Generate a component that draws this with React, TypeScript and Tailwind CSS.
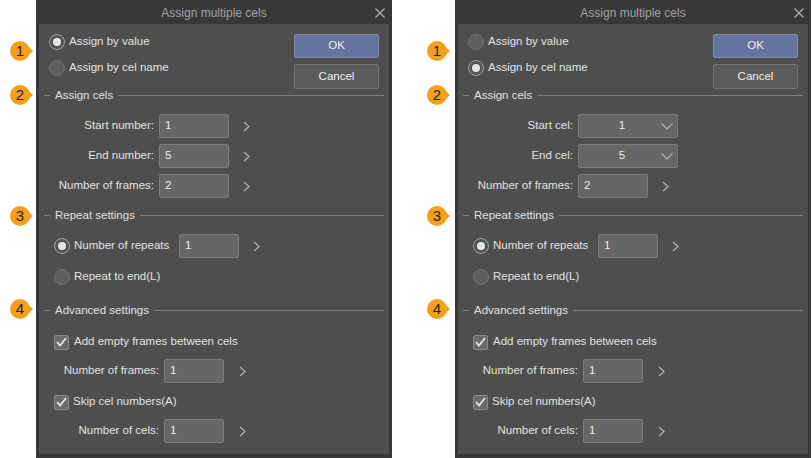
import React from "react";

const FONT = { fontFamily: '"Liberation Sans", Arial, sans-serif' };

function Badge({ n, top, left }: { n: number; top: number; left: number }) {
  return (
    <div className="absolute w-[24px] h-[20px]" style={{ top, left }}>
      <svg width="24" height="20" viewBox="0 0 24 20" className="absolute left-0 top-0">
        <path d="M16 3.5 L23 10 L16 16.5 Z" fill="#f4a01c" />
        <circle cx="10" cy="10" r="10" fill="#f4a01c" />
      </svg>
      <span className="absolute left-0 top-0 w-[20px] h-[20px] flex items-center justify-center text-[15px] text-[#262626]" style={FONT}>
        {n}
      </span>
    </div>
  );
}

function Radio({ checked }: { checked: boolean }) {
  return checked ? (
    <span className="w-[16px] h-[16px] rounded-full border-[1.5px] border-[#a6a6a6] bg-[#555555] flex items-center justify-center shrink-0">
      <span className="w-[8px] h-[8px] rounded-full bg-[#e6e6e6]" />
    </span>
  ) : (
    <span className="w-[16px] h-[16px] rounded-full border border-[#727272] bg-[#5e5e5e] shrink-0" />
  );
}

function Check() {
  return (
    <span className="w-[15px] h-[15px] rounded-[2px] border border-[#8a8a8a] bg-[#6a6a6a] flex items-center justify-center shrink-0">
      <svg width="11" height="10" viewBox="0 0 11 10">
        <polyline points="1,5 4,8.5 10,1" fill="none" stroke="#e6e6e6" strokeWidth="1.8" />
      </svg>
    </span>
  );
}

function Chevron() {
  return (
    <svg width="7" height="11" viewBox="0 0 7 11" className="shrink-0">
      <polyline points="1,1 6,5.5 1,10" fill="none" stroke="#b4b4b4" strokeWidth="1.2" />
    </svg>
  );
}

function Input({ value, w }: { value: string; w: number }) {
  return (
    <div
      className="h-[24px] rounded-[2px] border border-[#7c7c7c] bg-[#666666] text-[#eeeeee] pl-[5px] pt-[2px] text-[11.5px] leading-[16px] shrink-0"
      style={{ width: w }}
    >
      {value}
    </div>
  );
}

function Select({ value }: { value: string }) {
  return (
    <div className="w-[100px] h-[24px] rounded-[2px] border border-[#7c7c7c] bg-[#666666] text-[#eeeeee] flex items-center shrink-0">
      <span className="flex-1 text-center text-[11.5px] pl-[4px]">{value}</span>
      <svg width="12" height="7" viewBox="0 0 12 7" className="mr-[4px]">
        <polyline points="0.5,0.5 6,6 11.5,0.5" fill="none" stroke="#b4b4b4" strokeWidth="1.2" />
      </svg>
    </div>
  );
}

function Section({ title }: { title: string }) {
  return (
    <div className="h-[12px] flex items-center px-[5px]">
      <span className="w-[6px] h-px bg-[#7e7e7e]" />
      <span className="mx-[5px] text-[11.5px] leading-[12px] text-[#e0e0e0]">{title}</span>
      <span className="flex-1 h-px bg-[#7e7e7e]" />
    </div>
  );
}

function Dialog({ byName }: { byName: boolean }) {
  return (
    <div className="w-[356px] h-[458px] bg-[#383838] flex flex-col px-[3px] pb-[4px] shrink-0" style={FONT}>
      <div className="h-[24px] pt-[1px] grid grid-cols-[1fr_auto_1fr] items-center">
        <span />
        <span className="text-[12px] text-[#a2a2a2]">Assign multiple cels</span>
        <span className="justify-self-end mr-[4px] flex">
          <svg width="10" height="10" viewBox="0 0 10 10">
            <line x1="0.5" y1="0.5" x2="9.5" y2="9.5" stroke="#b0b0b0" strokeWidth="1.2" />
            <line x1="9.5" y1="0.5" x2="0.5" y2="9.5" stroke="#b0b0b0" strokeWidth="1.2" />
          </svg>
        </span>
      </div>
      <div className="flex-1 bg-[#4e4e4e] flex flex-col text-[11.5px] text-[#e2e2e2]">
        <div className="flex justify-between pt-[4px] pl-[10px] pr-[10px]">
          <div className="flex flex-col pt-[1px]">
            <div className="h-[26px] flex items-center gap-[4px]">
              <Radio checked={!byName} />
              <span>Assign by value</span>
            </div>
            <div className="h-[26px] flex items-center gap-[4px]">
              <Radio checked={byName} />
              <span>Assign by cel name</span>
            </div>
          </div>
          <div className="flex flex-col gap-[6px] pt-[6px]">
            <div className="w-[85px] h-[24px] rounded-[2px] border border-[#7d8db6] bg-[#64749c] flex items-center justify-center text-[#f0f0f0]">
              OK
            </div>
            <div className="w-[85px] h-[25px] rounded-[2px] border border-[#737373] bg-[#5b5b5b] flex items-center justify-center text-[#f0f0f0]">
              Cancel
            </div>
          </div>
        </div>

        <Section title="Assign cels" />
        <div className="flex flex-col gap-[6px] mt-[13px]">
          <div className="h-[24px] flex items-center">
            <span className="w-[115px] text-right">{byName ? "Start cel:" : "Start number:"}</span>
            <span className="ml-[5px] flex items-center">
              {byName ? <Select value="1" /> : (<><Input value="1" w={70} /><span className="ml-[14px]"><Chevron /></span></>)}
            </span>
          </div>
          <div className="h-[24px] flex items-center">
            <span className="w-[115px] text-right">{byName ? "End cel:" : "End number:"}</span>
            <span className="ml-[5px] flex items-center">
              {byName ? <Select value="5" /> : (<><Input value="5" w={70} /><span className="ml-[14px]"><Chevron /></span></>)}
            </span>
          </div>
          <div className="h-[24px] flex items-center">
            <span className="w-[115px] text-right">Number of frames:</span>
            <span className="ml-[5px] flex items-center">
              <Input value="2" w={70} />
              <span className="ml-[14px]"><Chevron /></span>
            </span>
          </div>
        </div>

        <div className="mt-[11px]">
          <Section title="Repeat settings" />
        </div>
        <div className="mt-[13px] h-[24px] flex items-center pl-[15px]">
          <span className="w-[125px] flex items-center gap-[4px]">
            <Radio checked />
            <span>Number of repeats</span>
          </span>
          <Input value="1" w={60} />
          <span className="ml-[14px]"><Chevron /></span>
        </div>
        <div className="mt-[7px] h-[24px] flex items-center pl-[15px] gap-[4px]">
          <Radio checked={false} />
          <span>Repeat to end(L)</span>
        </div>

        <div className="mt-[15px]">
          <Section title="Advanced settings" />
        </div>
        <div className="mt-[14px] h-[24px] flex items-center pl-[15px] gap-[5px]">
          <Check />
          <span>Add empty frames between cels</span>
        </div>
        <div className="mt-[5px] h-[24px] flex items-center">
          <span className="w-[120px] text-right">Number of frames:</span>
          <span className="ml-[5px]"><Input value="1" w={60} /></span>
          <span className="ml-[15px]"><Chevron /></span>
        </div>
        <div className="mt-[7px] h-[24px] flex items-center pl-[15px] gap-[4px]">
          <Check />
          <span>Skip cel numbers(A)</span>
        </div>
        <div className="mt-[5px] h-[24px] flex items-center">
          <span className="w-[120px] text-right">Number of cels:</span>
          <span className="ml-[5px]"><Input value="1" w={60} /></span>
          <span className="ml-[15px]"><Chevron /></span>
        </div>
      </div>
    </div>
  );
}

export default function App() {
  return (
    <div className="w-[812px] h-[458px] bg-white flex overflow-hidden">
      <div className="relative w-[392px] h-[458px] pl-[36px] flex shrink-0">
        <Dialog byName={false} />
        <Badge n={1} top={41} left={10} />
        <Badge n={2} top={85} left={10} />
        <Badge n={3} top={206} left={10} />
        <Badge n={4} top={299} left={10} />
      </div>
      <div className="relative w-[419px] h-[458px] pl-[63px] flex shrink-0">
        <Dialog byName />
        <Badge n={1} top={41} left={35} />
        <Badge n={2} top={85} left={35} />
        <Badge n={3} top={206} left={35} />
        <Badge n={4} top={299} left={35} />
      </div>
    </div>
  );
}
